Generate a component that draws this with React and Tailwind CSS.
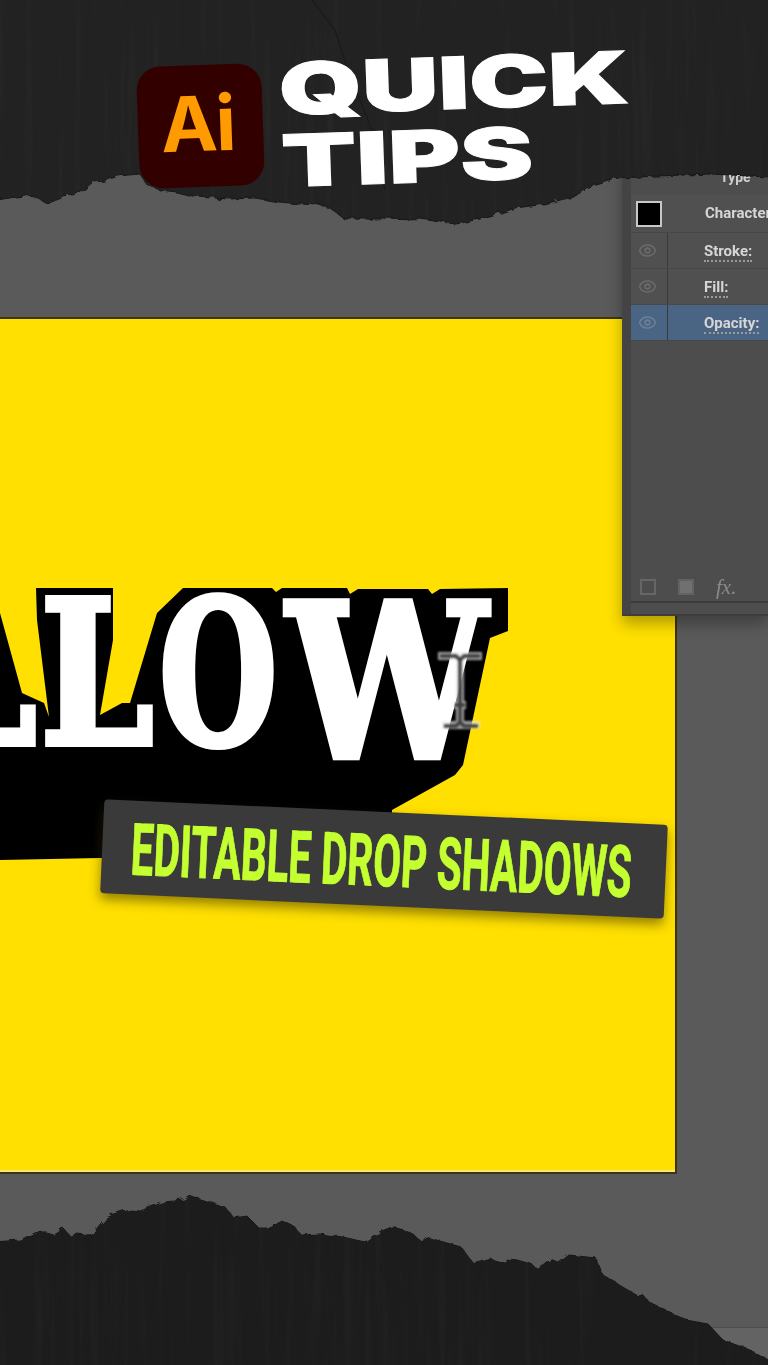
import { Eye } from "lucide-react";

const topEdge =
  "M-20 -20 H788 V178 L711 174 L657 176 L618 178 L600 184 L588 187 L569 198 L539 205 L515 208 L490 217 L470 221 L456 224 L441 222 L420 219 L382 218 L343 218 L330 208 L319 205 L300 204 L279 202 L255 198 L230 199 L196 197 L176 192 L160 190 L147 185 L140 174 L118 176 L105 181 L93 182 L80 193 L64 197 L49 203 L36 198 L24 196 L15 197 L-20 203 Z";

const bottomEdge =
  "M-20 1243 L20 1240 L39 1231 L54 1235 L64 1229 L70 1236 L78 1234 L91 1236 L105 1218 L130 1210 L140 1211 L164 1202 L184 1200 L191 1196 L206 1201 L225 1207 L234 1218 L247 1216 L258 1227 L269 1227 L281 1220 L294 1226 L301 1235 L319 1234 L343 1237 L365 1242 L373 1236 L395 1227 L414 1235 L422 1242 L426 1237 L461 1247 L473 1263 L490 1258 L501 1263 L511 1259 L532 1265 L537 1268 L551 1260 L559 1263 L569 1255 L596 1258 L603 1275 L637 1295 L642 1294 L650 1303 L686 1320 L708 1324 L723 1340 L750 1350 L788 1370 V1385 H-20 Z";

// Black extrusion behind the white letters
const shadowShape =
  "0,613 22,693 44,703 49,717 37,620 36,588 113,588 113,640 100,715 122,703 130,703 157,613 183,588 272,588 276,592 282,588 347,588 350,594 358,589 428,589 432,594 440,589 508,588 508,631 490,638 463,765 455,775 392,810 392,850 100,858 0,860";

function TornPaper() {
  return (
    <svg className="absolute inset-0 pointer-events-none" width="768" height="1365" viewBox="0 0 768 1365">
      <defs>
        <filter id="rough" x="-2%" y="-2%" width="104%" height="104%">
          <feTurbulence type="fractalNoise" baseFrequency="0.12" numOctaves="2" seed="7" result="n" />
          <feDisplacementMap in="SourceGraphic" in2="n" scale="6" />
        </filter>
        <filter id="grain" x="0" y="0" width="100%" height="100%">
          <feTurbulence type="fractalNoise" baseFrequency="0.12 0.005" numOctaves="3" seed="4" />
          <feColorMatrix values="0 0 0 0 1  0 0 0 0 1  0 0 0 0 1  1.4 0 0 0 -0.62" />
        </filter>
        <clipPath id="paper">
          <path d={topEdge} />
          <path d={bottomEdge} />
        </clipPath>
      </defs>
      <g filter="url(#rough)">
        <path d={topEdge} fill="#212121" stroke="#181818" />
        <path d={bottomEdge} fill="#1f1f1f" stroke="#181818" />
      </g>
      <g clipPath="url(#paper)">
        <rect width="768" height="1365" fill="#fff" opacity="0.035" filter="url(#grain)" />
        <path d="M312 0 L335 30 L348 70 L372 130 L385 190" fill="none" stroke="#1a1a1a" strokeWidth="1.2" />
      </g>
    </svg>
  );
}

function PanelRow({ label, active }) {
  return (
    <div className={`flex h-9 items-center border-b border-[#484848] ${active ? "bg-[#4a6484]" : "bg-[#505050]"}`}>
      <div className="flex w-[33px] justify-center">
        <Eye size={19} className={active ? "text-[#6c8099]" : "text-[#6b6b6b]"} strokeWidth={2} />
      </div>
      <div className="mx-[3px] h-full w-px bg-[#3a3a3a]" />
      <span className="ml-[33px] mt-[3px] border-b-2 border-dotted border-[#9a9a9a] font-['Roboto'] text-[15px] font-bold leading-[17px] text-[#d6d6d6]">
        {label}
      </span>
    </div>
  );
}

function AppearancePanel() {
  return (
    <div className="absolute left-[622px] top-[165px] flex h-[451px] w-[146px] overflow-hidden border-b-2 border-[#3c3c3c] bg-[#4d4d4d] shadow-[0_8px_14px_rgba(0,0,0,0.3)] blur-[0.5px]">
      <div className="w-[9px] shrink-0 bg-[#444444]" />
      <div className="flex min-w-0 flex-1 flex-col">
        <div className="h-[30px] pl-[89px] pt-[2px] font-['Roboto'] text-[14px] font-bold text-[#cfcfcf]">Type</div>
        <div className="flex h-[38px] shrink-0 items-center border-b border-[#474747] bg-[#505050]">
          <div className="ml-[5px] h-[26px] w-[26px] shrink-0 border-2 border-[#c8c8c8] bg-black" />
          <span className="ml-[43px] whitespace-nowrap font-['Roboto'] text-[15px] font-bold text-[#d6d6d6]">Character</span>
        </div>
        <PanelRow label="Stroke:" />
        <PanelRow label="Fill:" />
        <PanelRow label="Opacity:" active />
        <div className="flex-1" />
        <div className="flex h-[38px] shrink-0 items-center border-b-2 border-[#3c3c3c] pl-[9px] pt-[8px]">
          <div className="h-4 w-4 border-2 border-[#666666]" />
          <div className="ml-[22px] h-4 w-4 border-2 border-[#626262] bg-[#707070]" />
          <span className="ml-[22px] font-['Liberation_Serif'] text-[21px] italic leading-none text-[#8a8a8a]">fx.</span>
        </div>
        <div className="h-[11px] shrink-0" />
      </div>
    </div>
  );
}

function IBeam() {
  return (
    <svg className="absolute left-[430px] top-[645px] blur-[1px]" width="60" height="92" viewBox="0 0 60 92">
      <path d="M8 11 H52 M30 11 V80 M12 80 H50 M24 60 H36" fill="none" stroke="#e8e8e8" strokeOpacity="0.7" strokeWidth="8" />
      <path d="M10 11 H26 L30 15 L34 11 H50 M30 14 V78 M14 81 H26 L30 77 L34 81 H48 M25 60 H35" fill="none" stroke="#3d3d3d" strokeWidth="3.5" />
    </svg>
  );
}

export default function App() {
  return (
    <div className="relative h-[1365px] w-[768px] overflow-hidden bg-[#5a5a5a]">
      {/* Artboard */}
      <div className="mt-[317px] h-[857px] w-[677px] border-y-2 border-r-2 border-[#3d3510] bg-[#ffe000] shadow-[inset_0_-2px_0_#f4e87a]" />

      {/* Lower right panel edge */}
      <div className="absolute bottom-0 right-0 h-[38px] w-[60px] border-t border-[#4e4e4e] bg-[#636363]" />

      {/* Artwork */}
      <svg className="absolute inset-0" width="768" height="1365" viewBox="0 0 768 1365">
        <polygon points={shadowShape} fill="#000" />
      </svg>
      <div className="absolute left-[-77px] top-[556px] flex font-['DejaVu_Serif'] text-[200px] font-bold leading-[236px] text-white [-webkit-text-stroke:6px_#fff]">
        <span className="w-[117px] origin-left scale-x-[0.81]">L</span>
        <span className="w-[119px] origin-left scale-x-[0.81]">L</span>
        <span className="w-[128px] origin-left scale-x-[0.68]">O</span>
        <span className="origin-[left_top] scale-x-[0.89] scale-y-[1.07]">W</span>
      </div>
      <IBeam />

      <AppearancePanel />

      {/* Caption */}
      <div className="absolute left-[102px] top-[812px] flex h-[94px] w-[564px] rotate-[2.6deg] items-center overflow-hidden rounded-[4px] bg-[#3a3a3a] pl-[29px] pt-[5px] shadow-[0_6px_12px_rgba(60,50,0,0.55)]">
        <span className="origin-left scale-x-[0.56] whitespace-nowrap font-['Roboto'] text-[72px] font-bold leading-none text-[#c4ff30] [-webkit-text-stroke:1px_#c4ff30]">
          EDITABLE DROP SHADOWS
        </span>
      </div>

      <TornPaper />

      {/* Header */}
      <div className="absolute left-[138px] top-[65px] flex items-start gap-[17px]">
        <div className="flex h-[122px] w-[125px] -rotate-2 items-center justify-center rounded-[24px] bg-[#330000] pb-[7px] pr-[6px]">
          <span className="font-['Inter'] text-[76px] font-bold leading-none tracking-[-2px] text-[#ff9a00]">Ai</span>
        </div>
        <div className="-mt-[16px] flex -rotate-2 flex-col font-['Inter'] text-[72px] font-black leading-[72px] text-white [-webkit-text-stroke:1px_#fff]">
          <span className="origin-left scale-x-[1.47]">QUICK</span>
          <span className="origin-left scale-x-[1.52]">TIPS</span>
        </div>
      </div>
    </div>
  );
}
